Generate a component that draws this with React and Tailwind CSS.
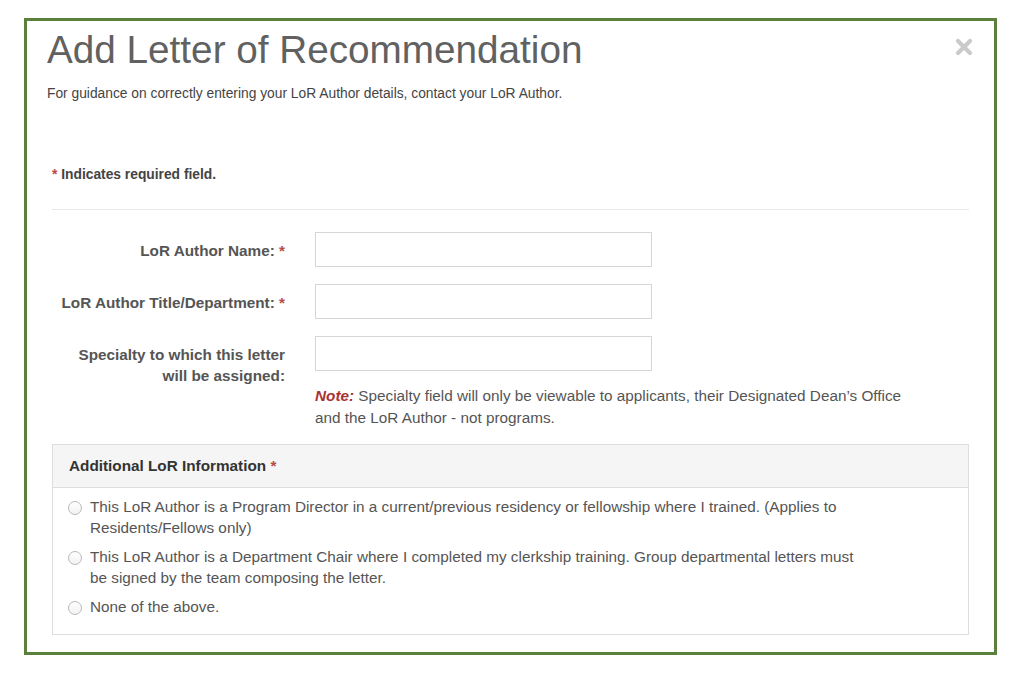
import React from "react";

function Req() {
  return <span className="text-[#b94a48]"> *</span>;
}

function Radio({ children }) {
  return (
    <div className="flex items-start">
      <span className="mt-[5px] h-[14px] w-[14px] shrink-0 rounded-full border border-[#b8b8b8] bg-gradient-to-b from-white to-[#f2f2f2]" />
      <span className="ml-[8px] w-[780px] leading-[21px]">{children}</span>
    </div>
  );
}

function Row({ label, req, children }) {
  return (
    <div className="flex items-start">
      <div className="w-[233px] shrink-0 pt-[8px] text-right font-bold leading-[21px] text-[#555]">
        {label}
        {req && <Req />}
      </div>
      <div className="ml-[30px]">{children}</div>
    </div>
  );
}

function Input() {
  return <div className="h-[35px] w-[337px] border border-[#d6d6d6] bg-white" />;
}

export default function App() {
  return (
    <div className="h-[681px] w-[1024px] bg-white pl-[24px] pt-[18px] font-['Liberation_Sans',Arial,sans-serif] text-[15.3px] text-[#555]">
      <div className="relative h-[637px] w-[973px] border-[3px] border-[#5b7f3d] bg-white">
        <svg
          className="absolute right-[21px] top-[17px]"
          width="18"
          height="18"
          viewBox="0 0 18 18"
        >
          <path d="M3 3 L15 15 M15 3 L3 15" stroke="#cacaca" strokeWidth="4.2" strokeLinecap="round" />
        </svg>

        <div className="pl-[20px] pt-[7px]">
          <h1 className="text-[38.7px] font-normal leading-[43px] text-[#616161]">
            Add Letter of Recommendation
          </h1>
          <p className="mt-[13px] text-[13.8px] leading-[20px] text-[#444]">
            For guidance on correctly entering your LoR Author details, contact your LoR Author.
          </p>
        </div>

        <div className="px-[25px]">
          <p className="mt-[61px] text-[13.8px] font-bold leading-[20px] text-[#444]">
            <span className="text-[#b94a48]">*</span> Indicates required field.
          </p>
          <div className="mt-[24px] border-t border-[#e8e8e8]" />

          <div className="mt-[22px] flex flex-col gap-[17px]">
            <Row label="LoR Author Name:" req>
              <Input />
            </Row>
            <Row label="LoR Author Title/Department:" req>
              <Input />
            </Row>
            <Row label="Specialty to which this letter will be assigned:">
              <Input />
              <p className="mt-[14px] w-[600px] leading-[22px]">
                <span className="font-bold italic text-[#a83232]">Note:</span> Specialty field will only be viewable to
                applicants, their Designated Dean&rsquo;s Office and the LoR Author - not programs.
              </p>
            </Row>
          </div>

          <div className="mt-[15px] border border-[#dedede]">
            <div className="flex h-[43px] items-center border-b border-[#dedede] bg-[#f5f5f5] pl-[16px] font-bold text-[#333]">
              <span>
                Additional LoR Information
                <Req />
              </span>
            </div>
            <div className="flex flex-col gap-[8px] pb-[17px] pl-[15px] pt-[8px]">
              <Radio>
                This LoR Author is a Program Director in a current/previous residency or fellowship where I trained.
                (Applies to Residents/Fellows only)
              </Radio>
              <Radio>
                This LoR Author is a Department Chair where I completed my clerkship training. Group departmental letters
                must be signed by the team composing the letter.
              </Radio>
              <Radio>None of the above.</Radio>
            </div>
          </div>
        </div>
      </div>
    </div>
  );
}
